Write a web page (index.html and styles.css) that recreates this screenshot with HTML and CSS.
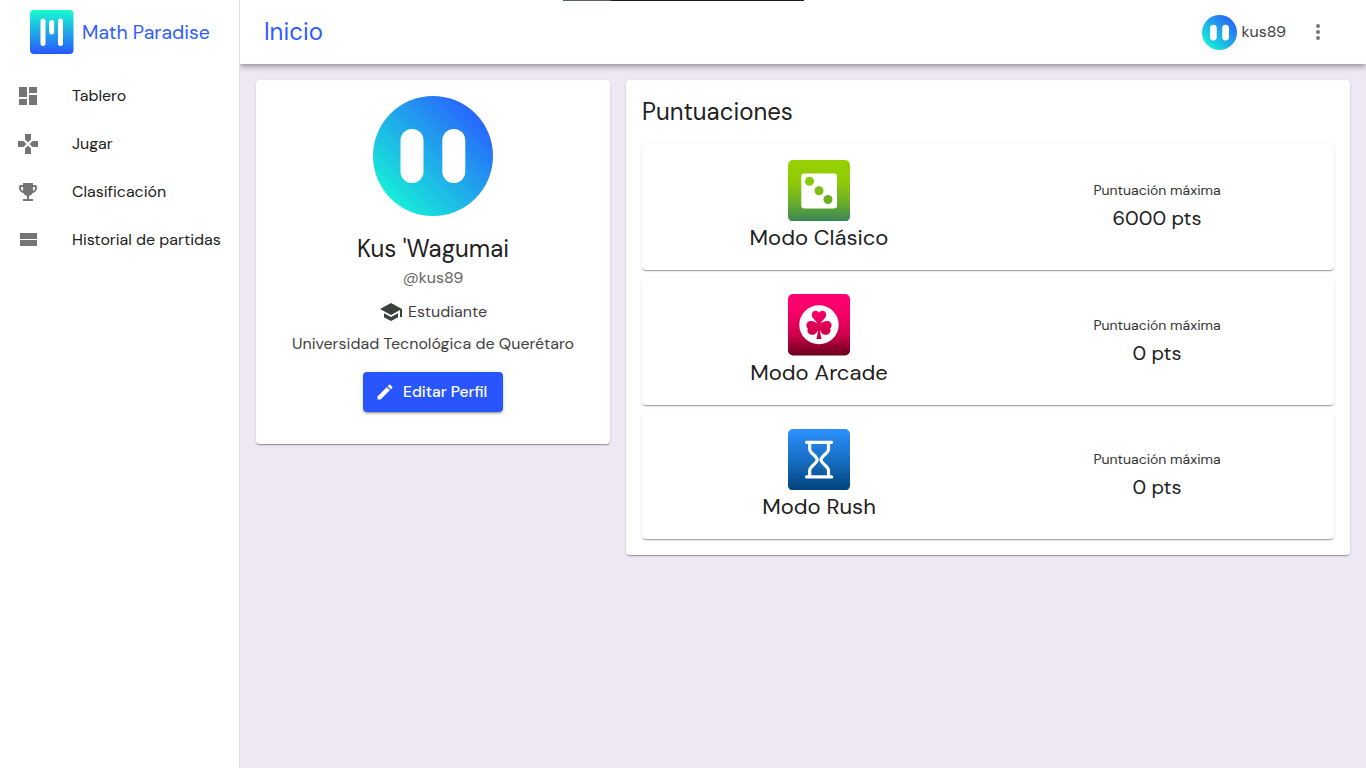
FILE: index.html
```html
<!DOCTYPE html>
<html lang="es">
<head>
<meta charset="utf-8">
<title>Math Paradise</title>
<link rel="stylesheet" href="styles.css">
</head>
<body>
<div class="app">
  <aside class="sidebar">
    <div class="brand">
      <svg class="brand-logo" viewBox="0 0 44 44"><defs><linearGradient id="brand" x1="0" y1="0" x2="0" y2="1"><stop offset="0" stop-color="#17fcd0"/><stop offset="1" stop-color="#2955ff"/></linearGradient></defs><rect width="43.5" height="44" rx="4" fill="url(#brand)"/><g fill="#fff"><rect x="10.5" y="8.5" width="5" height="27.5" rx="2.5"/><rect x="19.2" y="10" width="5" height="14.5" rx="2.5"/><rect x="28" y="8.5" width="5" height="27.5" rx="2.5"/></g></svg>
      <span class="brand-name">Math Paradise</span>
    </div>
    <nav class="nav">
      <a class="nav-item"><svg class="icon" viewBox="0 0 24 24"><path d="M3 13h8V3H3v10zm0 8h8v-6H3v6zm10 0h8V11h-8v10zm0-18v6h8V3h-8z"/></svg><span>Tablero</span></a>
      <a class="nav-item"><svg class="icon" viewBox="0 0 24 24"><path d="M15 7.500V2H9v5.500l3 3 3-3zM7.500 9H2v6h5.500l3-3-3-3zM9 16.500V22h6v-5.500l-3-3-3 3zM16.500 9l-3 3 3 3H22V9h-5.500z"/></svg><span>Jugar</span></a>
      <a class="nav-item"><svg class="icon" viewBox="0 0 24 24"><path d="M19 5h-2V3H7v2H5c-1.100 0-2 .9-2 2v1c0 2.550 1.920 4.630 4.390 4.940A5.010 5.010 0 0 0 11 15.900V19H7v2h10v-2h-4v-3.100a5.010 5.010 0 0 0 3.610-2.960C19.080 12.630 21 10.550 21 8V7c0-1.100-.9-2-2-2zM5 8V7h2v3.820C5.840 10.400 5 9.300 5 8zm14 0c0 1.300-.84 2.400-2 2.820V7h2v1z"/></svg><span>Clasificación</span></a>
      <a class="nav-item"><svg class="icon" viewBox="0 0 24 24"><path d="M4 18h17v-6H4v6zM4 5v6h17V5H4z"/></svg><span>Historial de partidas</span></a>
    </nav>
  </aside>
  <div class="content">
    <header class="topbar">
      <h1 class="page-title">Inicio</h1>
      <div class="user">
        <svg class="user-avatar" viewBox="0 0 120 120"><defs><linearGradient id="face" x1=".14" y1=".86" x2=".86" y2=".14"><stop offset="0" stop-color="#17edd9"/><stop offset="1" stop-color="#2865fc"/></linearGradient></defs><circle cx="60" cy="60" r="60" fill="url(#face)"/><rect x="27.500" y="33" width="23" height="54" rx="11.500" fill="#fff"/><rect x="69.300" y="33" width="23" height="54" rx="11.500" fill="#fff"/></svg>
        <span class="user-name">kus89</span>
        <svg class="icon" viewBox="0 0 24 24"><circle cx="12" cy="6" r="2"/><circle cx="12" cy="12" r="2"/><circle cx="12" cy="18" r="2"/></svg>
      </div>
    </header>
    <main class="main">
      <section class="card profile">
        <svg class="avatar" viewBox="0 0 120 120"><circle cx="60" cy="60" r="60" fill="url(#face)"/><rect x="27.500" y="33" width="23" height="54" rx="11.500" fill="#fff"/><rect x="69.300" y="33" width="23" height="54" rx="11.500" fill="#fff"/></svg>
        <h2 class="name">Kus 'Wagumai</h2>
        <p class="handle">@kus89</p>
        <p class="role"><svg class="icon" viewBox="0 0 24 24"><path d="M5 13.180v4L12 21l7-3.820v-4L12 17l-7-3.820zM12 3L1 9l11 6 9-4.910V17h2V9L12 3z"/></svg><span>Estudiante</span></p>
        <p class="school">Universidad Tecnológica de Querétaro</p>
        <button class="edit"><svg viewBox="0 0 24 24"><path d="M3 17.250V21h3.750L17.810 9.940l-3.750-3.750L3 17.250zM20.710 7.040a1 1 0 0 0 0-1.410l-2.340-2.340a1 1 0 0 0-1.410 0l-1.830 1.830 3.750 3.750 1.830-1.830z"/></svg><span>Editar Perfil</span></button>
      </section>
      <section class="card scores">
        <h2 class="scores-title">Puntuaciones</h2>
        <div class="modes">
          <article class="card mode">
            <div class="mode-info">
              <svg class="mode-icon" viewBox="0 0 62 61" preserveAspectRatio="none"><defs><linearGradient id="green" x1="0" y1="0" x2="0" y2="1"><stop offset="0" stop-color="#99d000"/><stop offset=".35" stop-color="#8fcb05"/><stop offset=".7" stop-color="#69ad2a"/><stop offset="1" stop-color="#388558"/></linearGradient></defs><rect width="62" height="61" rx="5" fill="url(#green)"/><rect x="13.300" y="13.300" width="35.700" height="34.700" rx="2.500" fill="#fff"/><circle cx="21.500" cy="21" r="4.500" fill="#89c80b"/><circle cx="31" cy="30.500" r="4.500" fill="#80bd16"/><circle cx="40" cy="39.200" r="4.500" fill="#6fb023"/></svg>
              <h3 class="mode-name">Modo Clásico</h3>
            </div>
            <div class="mode-score"><span class="label">Puntuación máxima</span><span class="points">6000 pts</span></div>
          </article>
          <article class="card mode">
            <div class="mode-info">
              <svg class="mode-icon" viewBox="0 0 62 62" preserveAspectRatio="none"><defs><linearGradient id="pink" gradientUnits="userSpaceOnUse" x1="0" y1="0" x2="0" y2="62"><stop offset="0" stop-color="#ff0072"/><stop offset=".3" stop-color="#f70069"/><stop offset=".65" stop-color="#cf004d"/><stop offset="1" stop-color="#6b001d"/></linearGradient></defs><rect width="62" height="62" rx="5" fill="url(#pink)"/><circle cx="31" cy="31" r="19.700" fill="#fff"/><path fill="url(#pink)" d="M29.300 29.500C28 27 23.800 24.500 23.800 21c0-4.800 5.200-5.300 7.200-2.200 2-3.100 7.200-2.600 7.200 2.200 0 3.500-4.200 6-5.500 8.500 2.500-1.300 4.500-3 7.300-2.200 3.900 1 4.700 5 2.200 7.500 1.600 4.200-2.200 7.200-5.900 6.200-2.400-.7-3.500-3-4.300-5 .2 3.300.8 6.300 1.600 9.300h-5.200c.8-3 1.400-6 1.600-9.300-.8 2-1.900 4.300-4.300 5-3.700 1-7.500-2-5.900-6.200-2.500-2.500-1.700-6.500 2.200-7.500 2.800-.8 4.800.9 7.300 2.200z"/></svg>
              <h3 class="mode-name">Modo Arcade</h3>
            </div>
            <div class="mode-score"><span class="label">Puntuación máxima</span><span class="points">0 pts</span></div>
          </article>
          <article class="card mode">
            <div class="mode-info">
              <svg class="mode-icon" viewBox="0 0 62 61" preserveAspectRatio="none"><defs><linearGradient id="blue" x1="0" y1="0" x2="0" y2="1"><stop offset="0" stop-color="#2b90ff"/><stop offset=".5" stop-color="#176fc3"/><stop offset="1" stop-color="#00427a"/></linearGradient></defs><rect width="62" height="61" rx="5" fill="url(#blue)"/><path fill="none" stroke="#fff" stroke-width="3.200" stroke-linecap="round" stroke-linejoin="round" d="M18.500 13.200h25.200M18.500 47.500h25.200M21.700 14v6c0 4 7.500 7 7.500 10.500S21.700 37 21.700 41v6M40.500 14v6c0 4-7.500 7-7.500 10.500s7.500 6.500 7.500 10.500v6"/></svg>
              <h3 class="mode-name">Modo Rush</h3>
            </div>
            <div class="mode-score"><span class="label">Puntuación máxima</span><span class="points">0 pts</span></div>
          </article>
        </div>
      </section>
    </main>
  </div>
  <div class="progress"><span class="progress-fill"></span></div>
</div>
</body>
</html>
```
FILE: styles.css
```css
* { box-sizing: border-box; }
body { margin: 0; font-family: "DM Sans", Inter, "Liberation Sans", sans-serif; color: #212121; font-size: 16px; }
h1, h2, h3, p { margin: 0; font-weight: 400; white-space: nowrap; }
svg { display: block; flex: none; }
.app { display: flex; height: 768px; background: #eee8f4; overflow: hidden; }
.sidebar { width: 240px; flex: none; background: #fff; border-right: 1px solid #e0e0e0; position: relative; z-index: 2; }
.brand { height: 64px; display: flex; align-items: center; padding-left: 30px; gap: 8px; color: #2f5dff; }
.brand-logo { width: 44px; height: 44px; }
.brand-name { font-size: 19.500px; white-space: nowrap; }
.nav { padding-top: 8px; }
.nav-item { display: flex; align-items: center; gap: 32px; height: 48px; padding-left: 16px; white-space: nowrap; }
.nav-item span { line-height: 24px; padding-bottom: 1px; letter-spacing: -.02px; }
.icon { width: 24px; height: 24px; fill: #757575; }
.content { flex: 1; min-width: 0; }
.topbar { height: 64px; display: flex; align-items: center; justify-content: space-between; padding: 0 36px 0 24px; background: #fff; box-shadow: 0 2px 4px -1px rgba(0,0,0,.2), 0 4px 5px rgba(0,0,0,.14), 0 1px 10px rgba(0,0,0,.12); position: relative; }
.page-title { font-size: 24px; line-height: 32px; color: #2f5dff; }
.user { display: flex; align-items: center; color: #424242; }
.user-avatar { width: 35px; height: 35px; margin-right: 4.500px; }
.user-name { width: 64.500px; line-height: 24px; padding-bottom: 1px; }
.main { display: grid; grid-template-columns: 354px 724px; gap: 16px; padding: 16px; align-items: start; }
.card { background: #fff; border-radius: 4px; box-shadow: 0 2px 1px -1px rgba(0,0,0,.2), 0 1px 1px rgba(0,0,0,.14), 0 1px 3px rgba(0,0,0,.12); }
.profile { height: 364px; padding-top: 16px; display: flex; flex-direction: column; align-items: center; }
.avatar { width: 120px; height: 120px; }
.name { font-size: 24px; line-height: 32px; margin-top: 17px; }
.handle { line-height: 24px; margin-top: 1px; color: #666; }
.role { display: flex; align-items: center; gap: 5px; height: 24px; margin-top: 10px; color: #424242; }
.role span { line-height: 24px; }
.role .icon { fill: #3c403d; }
.school { line-height: 24px; margin-top: 8px; color: #424242; }
.edit { display: flex; align-items: center; gap: 8px; width: 140px; height: 40px; margin-top: 16px; padding: 0 0 0 12px; border: 0; border-radius: 4px; background: #2955ff; color: #fff; font: 500 15.600px "DM Sans", Inter, sans-serif; white-space: nowrap; box-shadow: 0 3px 1px -2px rgba(0,0,0,.2), 0 2px 2px rgba(0,0,0,.14), 0 1px 5px rgba(0,0,0,.12); }
.edit svg { width: 20px; height: 20px; fill: #fff; }
.scores { height: 475px; padding: 16px; }
.scores-title { font-size: 24px; line-height: 32px; }
.modes { display: flex; flex-direction: column; gap: 8px; margin-top: 15.500px; }
.mode { display: flex; height: 126.500px; }
.mode-info { width: 354px; padding-top: 16px; display: flex; flex-direction: column; align-items: center; }
.mode-icon { width: 62px; height: 61.500px; }
.mode-name { font-size: 22px; line-height: 32px; margin-top: 1px; }
.mode-score { width: 322px; display: flex; flex-direction: column; align-items: center; padding-top: 34.500px; }
.label { font-size: 14px; line-height: 24px; color: #333; white-space: nowrap; }
.points { font-size: 20px; line-height: 32px; white-space: nowrap; }
.progress { position: absolute; z-index: 3; top: 0; left: 563px; width: 241px; height: 1px; background: #1c1c1c; }
.progress-fill { display: block; width: 48px; height: 1px; background: #526070; }
```
